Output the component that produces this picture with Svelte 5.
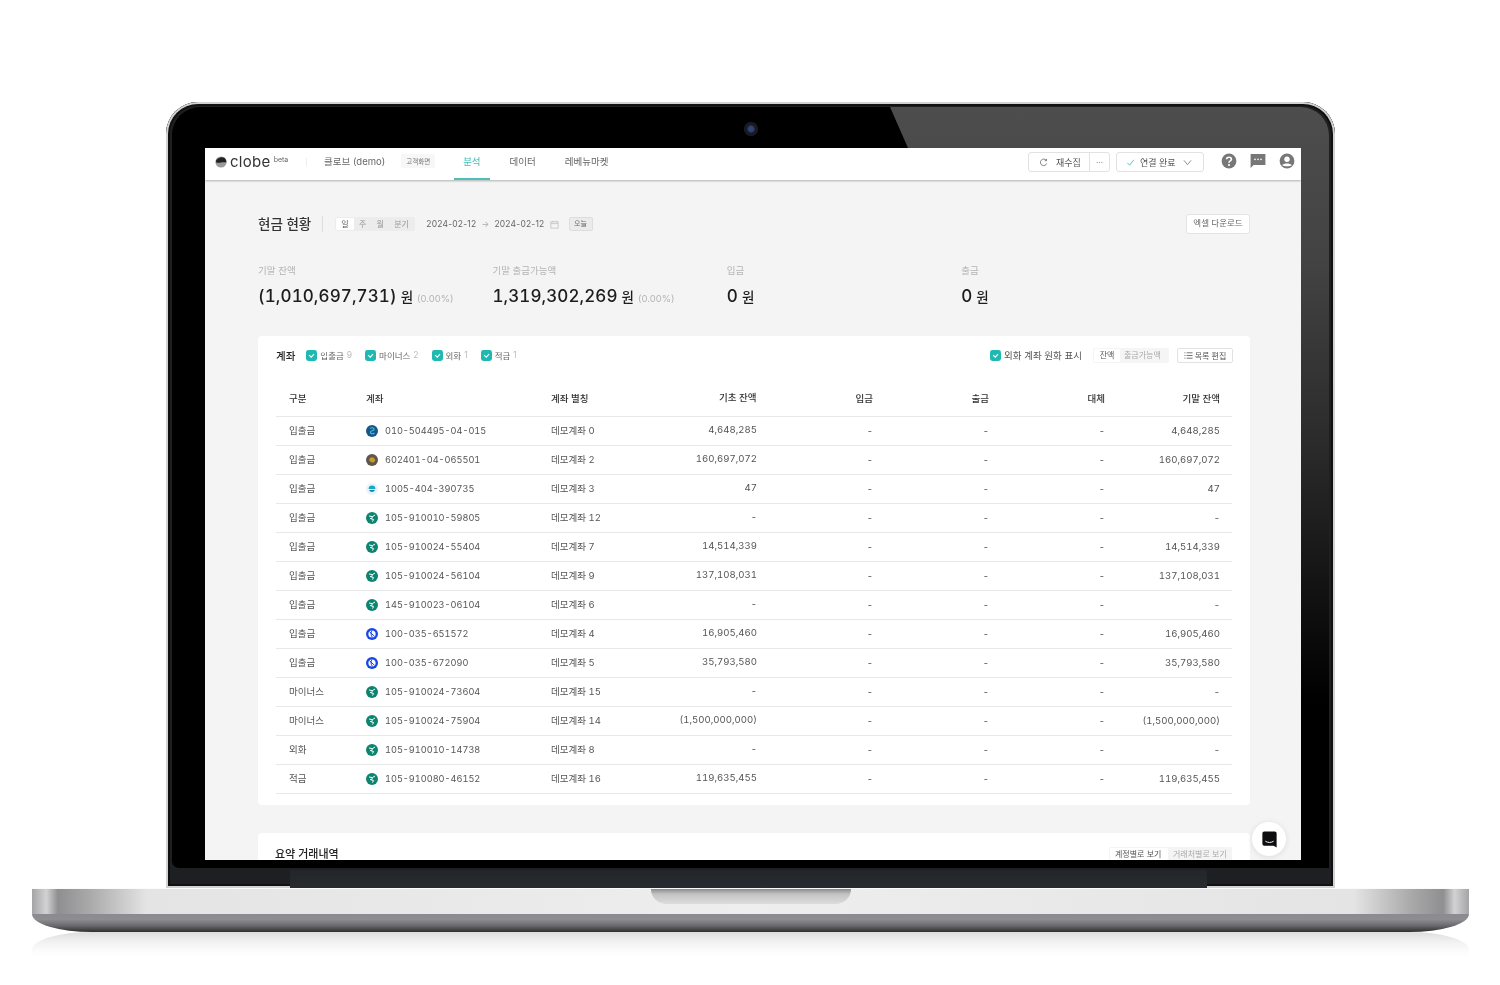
<script lang="ts">
  type Bank = 'ibk' | 'kb' | 'shinhan' | 'hana' | 'woori'

  interface Row {
    kind: string
    bank: Bank
    account: string
    alias: string
    opening: string
    closing: string
  }

  const rows: Row[] = [
    { kind: '입출금', bank: 'ibk', account: '010-504495-04-015', alias: '데모계좌 0', opening: '4,648,285', closing: '4,648,285' },
    { kind: '입출금', bank: 'kb', account: '602401-04-065501', alias: '데모계좌 2', opening: '160,697,072', closing: '160,697,072' },
    { kind: '입출금', bank: 'shinhan', account: '1005-404-390735', alias: '데모계좌 3', opening: '47', closing: '47' },
    { kind: '입출금', bank: 'hana', account: '105-910010-59805', alias: '데모계좌 12', opening: '-', closing: '-' },
    { kind: '입출금', bank: 'hana', account: '105-910024-55404', alias: '데모계좌 7', opening: '14,514,339', closing: '14,514,339' },
    { kind: '입출금', bank: 'hana', account: '105-910024-56104', alias: '데모계좌 9', opening: '137,108,031', closing: '137,108,031' },
    { kind: '입출금', bank: 'hana', account: '145-910023-06104', alias: '데모계좌 6', opening: '-', closing: '-' },
    { kind: '입출금', bank: 'woori', account: '100-035-651572', alias: '데모계좌 4', opening: '16,905,460', closing: '16,905,460' },
    { kind: '입출금', bank: 'woori', account: '100-035-672090', alias: '데모계좌 5', opening: '35,793,580', closing: '35,793,580' },
    { kind: '마이너스', bank: 'hana', account: '105-910024-73604', alias: '데모계좌 15', opening: '-', closing: '-' },
    { kind: '마이너스', bank: 'hana', account: '105-910024-75904', alias: '데모계좌 14', opening: '(1,500,000,000)', closing: '(1,500,000,000)' },
    { kind: '외화', bank: 'hana', account: '105-910010-14738', alias: '데모계좌 8', opening: '-', closing: '-' },
    { kind: '적금', bank: 'hana', account: '105-910080-46152', alias: '데모계좌 16', opening: '119,635,455', closing: '119,635,455' }
  ]

  const filters = [
    { label: '입출금', count: 9 },
    { label: '마이너스', count: 2 },
    { label: '외화', count: 1 },
    { label: '적금', count: 1 }
  ]

  const stats = [
    { label: '기말 잔액', value: '(1,010,697,731)', rate: '(0.00%)' },
    { label: '기말 출금가능액', value: '1,319,302,269', rate: '(0.00%)' },
    { label: '입금', value: '0', rate: '' },
    { label: '출금', value: '0', rate: '' }
  ]
</script>

{#snippet check()}
  <svg class="check" viewBox="0 0 10 10" aria-hidden="true">
    <rect width="10" height="10" rx="2.2" fill="#1fb9b1" />
    <path d="M2.8 4.6 L4.8 6.5 L7.3 3.8" fill="none" stroke="#fff" stroke-width="1" />
  </svg>
{/snippet}

{#snippet bankIcon(bank: Bank)}
  <svg class="bank" viewBox="0 0 12 12" aria-hidden="true">
    {#if bank === 'ibk'}
      <circle cx="6" cy="6" r="6" fill="#17558f" />
      <path d="M4 3.4 C6 2 8.6 3 8 4.8 C7.4 6.2 4.6 5.4 4.4 7 C4.2 8.6 6.8 9.4 8.4 8" fill="none" stroke="#47c5c9" stroke-width="1.1" />
    {:else if bank === 'kb'}
      <circle cx="6" cy="6" r="6" fill="#5f574a" />
      <path d="M3.2 5.6 C4 3.4 6.6 2.8 7.4 3.8 C8 4.6 9.4 5 9.2 6.4 C9 8 6.6 9 5.4 8.2 C4.6 7.6 3 7.2 3.2 5.6 Z" fill="#c99a2e" />
    {:else if bank === 'shinhan'}
      <circle cx="6" cy="6" r="6" fill="#e8f4f8" />
      <path d="M2.6 6 A3.4 3.4 0 0 1 9.4 6 Z" fill="#16a7c9" />
      <path d="M3 7 H9 A3.2 3.2 0 0 1 3 7 Z" fill="#1587b8" />
    {:else if bank === 'hana'}
      <circle cx="6" cy="6" r="6" fill="#0b8570" />
      <path d="M3 4 L6.4 4.6 L9 3 M6.4 4.6 L5.6 7 L7.6 7.6 L6.4 9.6 M5.6 7 L4 6.4" fill="none" stroke="#fff" stroke-width="1" />
    {:else}
      <circle cx="6" cy="6" r="6" fill="#1747e6" />
      <circle cx="6" cy="6" r="3.6" fill="#fff" />
      <path d="M3.4 3.6 L8.6 8.4 M6 2.6 C4.6 4.6 4.8 7.4 6.4 9.4" fill="none" stroke="#1747e6" stroke-width="1" />
    {/if}
  </svg>
{/snippet}

<div class="stage">
  <div class="lid">
    <div class="glare"></div>
    <div class="camera"></div>

    <div class="screen">
      <header class="topbar">
        <div class="brand">
          <svg class="brand-mark" viewBox="0 0 12 12" aria-hidden="true">
            <circle cx="6" cy="6" r="5.6" fill="#9a9a9a" />
            <path d="M1 4.6 C2.6 2 7 0 9.6 2 C11 3.2 11.6 5 11.2 6.6 C8.6 5.2 4.6 7.6 1.2 6.4 Z" fill="#222" />
          </svg>
          <span class="brand-name">clobe</span>
          <span class="brand-beta">beta</span>
        </div>
        <span class="brand-sep"></span>
        <span class="company">클로브 (demo)</span>
        <span class="view-badge">고객화면</span>
        <nav class="nav">
          <span class="nav-item active">분석</span>
          <span class="nav-item">데이터</span>
          <span class="nav-item">레베뉴마켓</span>
        </nav>
        <div class="top-actions">
          <div class="btn-group">
            <span class="btn-main">
              <svg class="ico-refresh" viewBox="0 0 10 10" aria-hidden="true">
                <path d="M8 2.6 A3.6 3.6 0 1 0 8.6 6" fill="none" stroke="#666" stroke-width=".9" />
                <path d="M8.4 1 V3 H6.4" fill="none" stroke="#666" stroke-width=".9" />
              </svg>
              재수집
            </span>
            <span class="btn-more">···</span>
          </div>
          <div class="btn-status">
            <svg class="ico-ok" viewBox="0 0 10 10" aria-hidden="true">
              <path d="M1.5 5.4 L4 8 L8.8 2" fill="none" stroke="#45c4bd" stroke-width="1" />
            </svg>
            연결 완료
            <svg class="ico-caret" viewBox="0 0 10 10" aria-hidden="true">
              <path d="M1 2.6 L5 7.4 L9 2.6" fill="none" stroke="#777" stroke-width=".9" />
            </svg>
          </div>
          <div class="top-icons">
            <svg viewBox="0 0 16 16" aria-hidden="true">
              <circle cx="8" cy="8" r="7.4" fill="#777" />
              <path d="M5.6 6.2 C5.6 3.6 10.4 3.6 10.4 6.2 C10.4 8 8 7.8 8 9.8" fill="none" stroke="#fff" stroke-width="1.7" />
              <circle cx="8" cy="12" r="1.1" fill="#fff" />
            </svg>
            <svg viewBox="0 0 16 16" aria-hidden="true">
              <path d="M0.6 1 H15.4 V12 H3.6 L0.6 15 Z" fill="#777" />
              <circle cx="5" cy="6.4" r=".8" fill="#fff" />
              <circle cx="8" cy="6.4" r=".8" fill="#fff" />
              <circle cx="11" cy="6.4" r=".8" fill="#fff" />
            </svg>
            <svg viewBox="0 0 16 16" aria-hidden="true">
              <circle cx="8" cy="8" r="7.4" fill="#777" />
              <circle cx="8" cy="6.2" r="2.7" fill="#fff" />
              <path d="M3.2 12.2 C4.6 9.8 11.4 9.8 12.8 12.2 C11.2 13.6 4.8 13.6 3.2 12.2 Z" fill="#fff" />
            </svg>
          </div>
        </div>
      </header>

      <main class="content">
        <div class="title-row">
          <h1>현금 현황</h1>
          <span class="title-sep"></span>
          <div class="seg period">
            <span class="on">일</span><span>주</span><span>월</span><span>분기</span>
          </div>
          <span class="date">2024-02-12</span>
          <span class="arrow">→</span>
          <span class="date">2024-02-12</span>
          <svg class="ico-cal" viewBox="0 0 10 10" aria-hidden="true">
            <rect x="1" y="2" width="8" height="7" fill="none" stroke="#bbb" stroke-width=".8" />
            <path d="M1 4 H9 M3 1 V2.6 M7 1 V2.6" stroke="#bbb" stroke-width=".8" />
          </svg>
          <span class="today">오늘</span>
          <span class="download">엑셀 다운로드</span>
        </div>

        <div class="stats">
          {#each stats as s}
            <div class="stat">
              <div class="stat-label">{s.label}</div>
              <div class="stat-value">
                <strong>{s.value}</strong> <em>원</em>
                {#if s.rate}<small>{s.rate}</small>{/if}
              </div>
            </div>
          {/each}
        </div>

        <section class="card">
          <div class="card-head">
            <h2>계좌</h2>
            <div class="filters">
              {#each filters as f}
                <span class="filter">
                  {@render check()}
                  <span>{f.label}</span><i>{f.count}</i>
                </span>
              {/each}
            </div>
            <div class="head-right">
              <span class="fx-toggle">{@render check()}<span>외화 계좌 원화 표시</span></span>
              <div class="seg balance">
                <span class="on">잔액</span><span>출금가능액</span>
              </div>
              <span class="edit-list">
                <svg viewBox="0 0 10 10" aria-hidden="true">
                  <path d="M0.5 2 H1.6 M3 2 H9.5 M0.5 5 H1.6 M3 5 H9.5 M0.5 8 H1.6 M3 8 H9.5" stroke="#555" stroke-width=".9" />
                </svg>
                목록 편집
              </span>
            </div>
          </div>

          <table>
            <colgroup>
              <col class="c-kind" /><col class="c-account" /><col class="c-alias" />
              <col class="c-num" /><col class="c-num" /><col class="c-num" /><col class="c-last" />
            </colgroup>
            <thead>
              <tr>
                <th>구분</th>
                <th>계좌</th>
                <th>계좌 별칭</th>
                <th class="num">입금</th>
                <th class="num">출금</th>
                <th class="num">대체</th>
                <th class="num">기말 잔액</th>
              </tr>
            </thead>
            <tbody>
              {#each rows as r}
                <tr>
                  <td>{r.kind}</td>
                  <td><span class="acct">{@render bankIcon(r.bank)}{r.account}</span></td>
                  <td class="alias-cell"><span>{r.alias}</span><b>{r.opening}</b></td>
                  <td class="num">-</td>
                  <td class="num">-</td>
                  <td class="num">-</td>
                  <td class="num">{r.closing}</td>
                </tr>
              {/each}
            </tbody>
          </table>
          <span class="opening-head">기초 잔액</span>
        </section>

        <section class="card summary">
          <h2>요약 거래내역</h2>
          <div class="seg group-by">
            <span class="on">계정별로 보기</span><span>거래처별로 보기</span>
          </div>
        </section>
      </main>

      <div class="chat-fab">
        <svg viewBox="0 0 16 18" aria-hidden="true">
          <path d="M2.4 0.4 H13.6 A2 2 0 0 1 15.6 2.4 V17.4 L12.4 15.6 H2.4 A2 2 0 0 1 0.4 13.6 V2.4 A2 2 0 0 1 2.4 0.4 Z" fill="#0d0d0f" />
          <path d="M3.6 10.8 C6 12.6 10 12.6 12.4 10.8" fill="none" stroke="#fff" stroke-width="1" />
        </svg>
      </div>
    </div>
  </div>

  <div class="base">
    <div class="deck"><span class="notch"></span></div>
    <div class="lip"></div>
  </div>
  <div class="reflection"></div>
</div>

<style>
  :global(body) {
    margin: 0;
    background: #fff;
  }

  .stage {
    height: 985px;
    padding-top: 102px;
    box-sizing: border-box;
    overflow: hidden;
    background: #fff;
    font-family: Inter, 'Noto Sans CJK KR', sans-serif;
  }

  /* laptop lid */
  .lid {
    position: relative;
    box-sizing: border-box;
    width: 1169px;
    height: 786px;
    margin-left: 166px;
    padding: 46px 34px 28px 39px;
    border-radius: 32px 32px 0 0;
    background: #1d1f23;
    box-shadow: inset 0 0 0 2px #d2d2d2, inset 0 0 0 4px #111;
    overflow: hidden;
  }

  .lid::before {
    content: '';
    position: absolute;
    inset: 5px 6px 20px 6px;
    border-radius: 28px 28px 7px 7px;
    background: #000;
  }

  .lid::after {
    content: '';
    position: absolute;
    left: 124px;
    right: 128px;
    bottom: 0;
    height: 18px;
    background: linear-gradient(180deg, #22252a 0, #282b30 100%);
  }

  .glare {
    position: absolute;
    top: 5px;
    right: 6px;
    bottom: 20px;
    width: 439px;
    border-radius: 0 28px 0 0;
    background: linear-gradient(180deg, #4d4d4d 0%, #434343 20%, #2a2a2a 45%, #000 78%);
    clip-path: polygon(0 0, 100% 0, 100% 100%, 18px 100%, 18px 41px);
  }

  .camera {
    position: absolute;
    left: 578px;
    top: 20px;
    width: 14px;
    height: 14px;
    border-radius: 50%;
    background: radial-gradient(circle, #33447a 0 22%, #14161f 48%, #2e2e2e 100%);
  }

  /* laptop base */
  .base {
    position: relative;
    margin: 0 31px 0 32px;
  }

  .deck {
    display: flex;
    justify-content: center;
    height: 26px;
    background: linear-gradient(90deg, #a4a4a6 0, #d2d2d3 1%, #8f8f91 1.8%, #a9a9aa 4%, #e4e4e4 8%, #eeeeee 50%, #e4e4e4 92%, #a9a9aa 96%, #8f8f91 98.2%, #d2d2d3 99%, #a4a4a6 100%);
    border-top: 1px solid #fbfbfb;
    box-sizing: border-box;
  }

  .notch {
    width: 200px;
    height: 15px;
    border-radius: 0 0 15px 15px;
    background: linear-gradient(180deg, #8c8c8c 0, #c4c4c6 35%, #dcdcdd 100%);
  }

  .lip {
    height: 18px;
    border-radius: 0 0 60px 60px / 0 0 18px 18px;
    background: linear-gradient(180deg, #8a8a90 0, #8d8d92 30%, #6a6a6e 65%, #2e2e30 100%);
  }

  .reflection {
    height: 26px;
    margin: 0 31px 0 32px;
    border-radius: 60px 60px 0 0 / 18px 18px 0 0;
    background: linear-gradient(180deg, #dddddd 0, #f0f0f0 35%, #fbfbfb 70%, #fff 100%);
  }

  /* app screen */
  .screen {
    position: relative;
    z-index: 1;
    width: 1096px;
    height: 712px;
    overflow: hidden;
    background: #f4f4f4;
    color: #555;
    filter: blur(0.35px);
  }

  .topbar {
    position: relative;
    display: flex;
    align-items: center;
    box-sizing: border-box;
    height: 32px;
    padding: 0 6px 0 10px;
    background: #fff;
    box-shadow: 0 1px 2px rgba(0, 0, 0, 0.28);
    font-size: 9.5px;
  }

  .brand {
    display: flex;
    align-items: center;
    width: 91px;
    margin-bottom: 5px;
  }

  .brand-mark {
    width: 12px;
    height: 12px;
    margin-right: 3px;
  }

  .brand-name {
    font-size: 15px;
    font-weight: 400;
    letter-spacing: 0.3px;
    color: #333;
    line-height: 1;
  }

  .brand-beta {
    margin: -5px 0 0 3px;
    font-size: 7px;
    color: #666;
  }

  .brand-sep {
    width: 1px;
    height: 8px;
    margin-bottom: 5px;
    background: #eee;
  }

  .company {
    margin: 0 0 6px 17px;
    color: #666;
  }

  .view-badge {
    margin: 0 0 6px 16px;
    padding: 2px 5px;
    background: #f7f7f7;
    border-radius: 2px;
    font-size: 6.5px;
    color: #777;
  }

  .nav {
    display: flex;
    align-self: stretch;
    margin-left: 19px;
  }

  .nav-item {
    display: flex;
    align-items: center;
    padding: 0 9px 6px;
    margin-right: 11px;
    color: #666;
  }

  .nav-item.active {
    color: #3cc0b8;
    box-shadow: inset 0 -2px 0 #50bfb9;
  }

  .top-actions {
    display: flex;
    align-items: center;
    margin: 0 0 4px auto;
  }

  .btn-group,
  .btn-status {
    display: flex;
    align-items: center;
    box-sizing: border-box;
    height: 20px;
    border: 1px solid #e2e2e2;
    border-radius: 3px;
    background: #fff;
    color: #555;
    font-size: 9px;
  }

  .btn-group {
    width: 82px;
  }

  .btn-main {
    display: flex;
    align-items: center;
    box-sizing: border-box;
    width: 61px;
    height: 100%;
    padding-left: 10px;
    border-right: 1px solid #e2e2e2;
  }

  .ico-refresh {
    width: 9px;
    height: 9px;
    margin-right: 8px;
  }

  .btn-more {
    flex: 1;
    text-align: center;
    font-size: 8px;
    line-height: 14px;
  }

  .btn-status {
    width: 88px;
    margin-left: 6px;
    padding-left: 9px;
  }

  .ico-ok {
    width: 9px;
    height: 9px;
    margin-right: 5px;
  }

  .ico-caret {
    width: 9px;
    height: 9px;
    margin-left: 7px;
  }

  .top-icons {
    display: flex;
    gap: 13px;
    margin: 0 0 2px 17px;
  }

  .top-icons svg {
    display: block;
    width: 16px;
    height: 16px;
  }

  .content {
    padding: 34px 51px 0 53px;
  }

  .title-row {
    display: flex;
    align-items: center;
    height: 20px;
  }

  h1 {
    margin: 0 0 2px;
    font-size: 13.5px;
    font-weight: 500;
    color: #333;
  }

  .title-sep {
    width: 1px;
    height: 16px;
    margin: 0 12px 0 11px;
    background: #ddd;
  }

  .seg {
    display: flex;
    align-items: center;
    box-sizing: border-box;
    padding: 1px;
    background: #ececec;
    border-radius: 2px;
    color: #999;
    font-size: 8px;
  }

  .seg span.on {
    background: #fff;
    color: #555;
    border-radius: 1px;
  }

  .period {
    width: 80px;
    height: 14px;
  }

  .period span {
    width: 18px;
    text-align: center;
    line-height: 12px;
  }

  .period span:last-child {
    width: 26px;
  }

  .date {
    font-size: 8.5px;
    letter-spacing: 0.2px;
    color: #666;
  }

  .period + .date {
    margin-left: 11px;
  }

  .arrow {
    width: 18px;
    text-align: center;
    font-size: 8px;
    color: #aaa;
  }

  .ico-cal {
    width: 9px;
    height: 9px;
    margin-left: 5px;
  }

  .today {
    box-sizing: border-box;
    width: 24px;
    height: 14px;
    margin-left: 10px;
    background: #ebebeb;
    border: 1px solid #ddd;
    border-radius: 2px;
    text-align: center;
    font-size: 7px;
    line-height: 12px;
    color: #666;
  }

  .download {
    box-sizing: border-box;
    width: 64px;
    height: 20px;
    margin-left: auto;
    background: #fff;
    border: 1px solid #e4e4e4;
    border-radius: 3px;
    text-align: center;
    font-size: 8.5px;
    line-height: 17px;
    color: #666;
  }

  .stats {
    display: grid;
    grid-template-columns: repeat(4, 234.4px);
    margin-top: 30px;
  }

  .stat-label {
    height: 13px;
    font-size: 9.5px;
    line-height: 13px;
    color: #b4b4b4;
  }

  .stat-value {
    display: flex;
    align-items: baseline;
    height: 24px;
    margin-top: 7px;
    line-height: 24px;
    white-space: pre;
    color: #1d1d1d;
  }

  .stat-value strong {
    font-size: 17px;
    font-weight: 500;
    letter-spacing: 0.1px;
    font-variant-numeric: tabular-nums;
  }

  .stat-value em {
    margin-left: 4px;
    font-style: normal;
    font-size: 13.5px;
    font-weight: 500;
  }

  .stat-value small {
    margin-left: 4px;
    font-size: 9.5px;
    color: #b4b4b4;
  }

  .card {
    position: relative;
    margin-top: 28px;
    padding: 12px 18px 11px;
    background: #fff;
    border-radius: 4px;
  }

  .card-head {
    display: flex;
    align-items: center;
    height: 15px;
  }

  h2 {
    margin: 0;
    font-size: 10.5px;
    font-weight: 500;
    color: #222;
  }

  .check {
    flex: none;
    width: 11px;
    height: 11px;
  }

  .filters {
    display: flex;
    margin-left: 11px;
  }

  .filter {
    display: flex;
    align-items: center;
    margin-right: 13px;
    font-size: 8.5px;
    color: #666;
  }

  .filter .check {
    margin-right: 3px;
  }

  .filter span,
  .filter i,
  .fx-toggle span {
    margin-bottom: 2px;
  }

  .filter i {
    margin-left: 3px;
    font-style: normal;
    color: #bbb;
  }

  .head-right {
    display: flex;
    align-items: center;
    margin-left: auto;
  }

  .fx-toggle {
    display: flex;
    align-items: center;
    gap: 3px;
    font-size: 9.5px;
    color: #555;
  }

  .balance {
    width: 76px;
    height: 15px;
    margin-left: 11px;
    background: #f5f5f5;
  }

  .balance span {
    line-height: 13px;
    font-size: 8px;
  }

  .balance span:first-child {
    width: 26px;
    text-align: center;
  }

  .balance span:last-child {
    margin-left: 4px;
    color: #aaa;
  }

  .edit-list {
    display: flex;
    align-items: center;
    justify-content: center;
    gap: 2px;
    box-sizing: border-box;
    width: 56px;
    height: 15px;
    margin: 0 -1px 0 8px;
    border: 1px solid #e2e2e2;
    border-radius: 2px;
    font-size: 8px;
    color: #555;
  }

  .edit-list svg {
    width: 9px;
    height: 9px;
  }

  table {
    width: 956px;
    margin-top: 19px;
    border-collapse: separate;
    border-spacing: 0;
    table-layout: fixed;
    font-size: 9.5px;
  }

  .c-kind {
    width: 77px;
  }
  .c-account {
    width: 185px;
  }
  .c-alias {
    width: 231px;
  }
  .c-num {
    width: 116px;
  }
  .c-last {
    width: 115px;
  }

  th {
    box-sizing: border-box;
    height: 35px;
    padding: 0 0 2px 13px;
    border-bottom: 1px solid #e8e8e8;
    text-align: left;
    font-weight: 500;
    font-size: 9.5px;
    color: #333;
  }

  td {
    box-sizing: border-box;
    height: 29px;
    padding: 0 0 2px 13px;
    border-bottom: 1px solid #e8e8e8;
    color: #555;
    white-space: nowrap;
  }

  th.num,
  td.num {
    padding: 0 12px 2px 0;
    text-align: right;
  }

  td.num,
  .alias-cell b,
  .alias-cell span,
  .acct {
    font-variant-numeric: tabular-nums;
  }

  td.num,
  .alias-cell b {
    font-size: 9.6px;
  }

  .acct {
    display: flex;
    align-items: center;
    gap: 7px;
    font-size: 9.2px;
  }

  .bank {
    flex: none;
    width: 12px;
    height: 12px;
    margin-top: 2px;
  }

  .alias-cell {
    position: relative;
  }

  .alias-cell b {
    position: absolute;
    right: 12px;
    top: 7px;
    font-weight: 400;
  }

  .opening-head {
    position: absolute;
    left: 461px;
    top: 54px;
    font-size: 9.5px;
    font-weight: 500;
    color: #333;
  }

  .summary {
    height: 60px;
    display: flex;
    justify-content: space-between;
    align-items: flex-start;
    box-sizing: border-box;
    padding-right: 18px;
  }

  .summary h2 {
    font-size: 11px;
    line-height: 16px;
    margin: 1px 0 0 -1px;
  }

  .group-by {
    width: 123px;
    height: 18px;
    margin-top: 2px;
    align-items: flex-start;
    background: #f4f4f4;
  }

  .group-by span {
    line-height: 12px;
    font-size: 8px;
  }

  .group-by span:first-child {
    width: 58px;
    padding-left: 5px;
    box-sizing: border-box;
  }

  .group-by span:last-child {
    margin-left: 5px;
    color: #aaa;
  }

  .chat-fab {
    position: absolute;
    right: 15px;
    top: 674px;
    display: flex;
    align-items: center;
    justify-content: center;
    width: 34px;
    height: 34px;
    border-radius: 50%;
    background: #fff;
    box-shadow: 0 1px 6px rgba(0, 0, 0, 0.1);
  }

  .chat-fab svg {
    width: 15px;
    height: 17px;
  }
</style>
